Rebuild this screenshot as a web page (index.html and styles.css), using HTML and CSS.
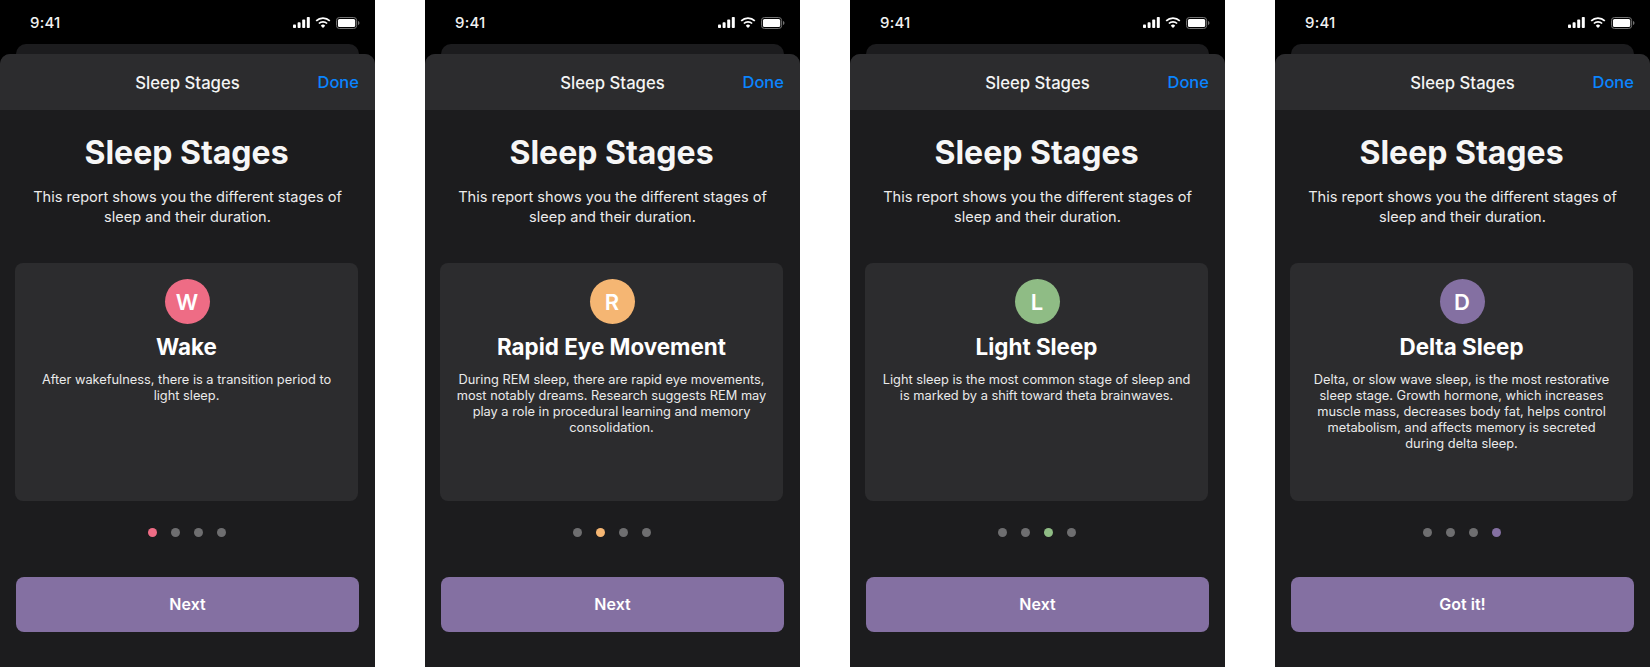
FILE: index.html
```html
<!DOCTYPE html>
<html lang="en">
<head>
<meta charset="utf-8">
<title>Sleep Stages</title>
<link rel="stylesheet" href="styles.css">
</head>
<body>
<main class="row">
  <section class="phone">
    <div class="status"><span class="time">9:41</span><span class="icons"><svg class="ic-signal" viewBox="0 0 17 11"><rect x="0" y="7.5" width="3" height="3.5" rx=".8"/><rect x="4.6" y="5.2" width="3" height="5.8" rx=".8"/><rect x="9.2" y="2.6" width="3" height="8.4" rx=".8"/><rect x="13.8" y="0" width="3" height="11" rx=".8"/></svg><svg class="ic-wifi" viewBox="0 0 16 11"><path class="arc" d="M1.200 3.900A9.800 9.800 0 0 1 14.800 3.900"/><path class="arc" d="M3.900 6.500A5.900 5.900 0 0 1 12.100 6.500"/><path d="M5.800 8.700A3.100 3.100 0 0 1 10.200 8.700L8 11z"/></svg><svg class="ic-batt" viewBox="0 0 25 12" preserveAspectRatio="none"><rect class="batt-shell" x=".5" y=".5" width="21" height="11" rx="3"/><rect x="2" y="2" width="18" height="8" rx="1.6"/><path class="batt-cap" d="M23 4v4c.8-.3 1.400-1.100 1.400-2S23.800 4.300 23 4z"/></svg></span></div>
    <div class="backsheet"></div>
    <div class="sheet">
      <header class="nav"><span class="nav-title">Sleep Stages</span><span class="done">Done</span></header>
      <div class="intro"><h1>Sleep Stages</h1><p>This report shows you the different stages of sleep and their duration.</p></div>
      <article class="card"><span class="badge wake">W</span><h2>Wake</h2><p>After wakefulness, there is a transition period to light sleep.</p></article>
      <div class="dots"><i class="dot wake"></i><i class="dot"></i><i class="dot"></i><i class="dot"></i></div>
      <button class="cta">Next</button>
    </div>
  </section>
  <section class="phone">
    <div class="status"><span class="time">9:41</span><span class="icons"><svg class="ic-signal" viewBox="0 0 17 11"><rect x="0" y="7.5" width="3" height="3.5" rx=".8"/><rect x="4.6" y="5.2" width="3" height="5.8" rx=".8"/><rect x="9.2" y="2.6" width="3" height="8.4" rx=".8"/><rect x="13.8" y="0" width="3" height="11" rx=".8"/></svg><svg class="ic-wifi" viewBox="0 0 16 11"><path class="arc" d="M1.200 3.900A9.800 9.800 0 0 1 14.800 3.900"/><path class="arc" d="M3.900 6.500A5.900 5.900 0 0 1 12.100 6.500"/><path d="M5.800 8.700A3.100 3.100 0 0 1 10.200 8.700L8 11z"/></svg><svg class="ic-batt" viewBox="0 0 25 12" preserveAspectRatio="none"><rect class="batt-shell" x=".5" y=".5" width="21" height="11" rx="3"/><rect x="2" y="2" width="18" height="8" rx="1.6"/><path class="batt-cap" d="M23 4v4c.8-.3 1.400-1.100 1.400-2S23.800 4.300 23 4z"/></svg></span></div>
    <div class="backsheet"></div>
    <div class="sheet">
      <header class="nav"><span class="nav-title">Sleep Stages</span><span class="done">Done</span></header>
      <div class="intro"><h1>Sleep Stages</h1><p>This report shows you the different stages of sleep and their duration.</p></div>
      <article class="card"><span class="badge rem">R</span><h2>Rapid Eye Movement</h2><p>During REM sleep, there are rapid eye movements, most notably dreams. Research suggests REM may play a role in procedural learning and memory consolidation.</p></article>
      <div class="dots"><i class="dot"></i><i class="dot rem"></i><i class="dot"></i><i class="dot"></i></div>
      <button class="cta">Next</button>
    </div>
  </section>
  <section class="phone">
    <div class="status"><span class="time">9:41</span><span class="icons"><svg class="ic-signal" viewBox="0 0 17 11"><rect x="0" y="7.5" width="3" height="3.5" rx=".8"/><rect x="4.6" y="5.2" width="3" height="5.8" rx=".8"/><rect x="9.2" y="2.6" width="3" height="8.4" rx=".8"/><rect x="13.8" y="0" width="3" height="11" rx=".8"/></svg><svg class="ic-wifi" viewBox="0 0 16 11"><path class="arc" d="M1.200 3.900A9.800 9.800 0 0 1 14.800 3.900"/><path class="arc" d="M3.900 6.500A5.900 5.900 0 0 1 12.100 6.500"/><path d="M5.800 8.700A3.100 3.100 0 0 1 10.200 8.700L8 11z"/></svg><svg class="ic-batt" viewBox="0 0 25 12" preserveAspectRatio="none"><rect class="batt-shell" x=".5" y=".5" width="21" height="11" rx="3"/><rect x="2" y="2" width="18" height="8" rx="1.6"/><path class="batt-cap" d="M23 4v4c.8-.3 1.400-1.100 1.400-2S23.800 4.300 23 4z"/></svg></span></div>
    <div class="backsheet"></div>
    <div class="sheet">
      <header class="nav"><span class="nav-title">Sleep Stages</span><span class="done">Done</span></header>
      <div class="intro"><h1>Sleep Stages</h1><p>This report shows you the different stages of sleep and their duration.</p></div>
      <article class="card"><span class="badge light">L</span><h2>Light Sleep</h2><p>Light sleep is the most common stage of sleep and is marked by a shift toward theta brainwaves.</p></article>
      <div class="dots"><i class="dot"></i><i class="dot"></i><i class="dot light"></i><i class="dot"></i></div>
      <button class="cta">Next</button>
    </div>
  </section>
  <section class="phone">
    <div class="status"><span class="time">9:41</span><span class="icons"><svg class="ic-signal" viewBox="0 0 17 11"><rect x="0" y="7.5" width="3" height="3.5" rx=".8"/><rect x="4.6" y="5.2" width="3" height="5.8" rx=".8"/><rect x="9.2" y="2.6" width="3" height="8.4" rx=".8"/><rect x="13.8" y="0" width="3" height="11" rx=".8"/></svg><svg class="ic-wifi" viewBox="0 0 16 11"><path class="arc" d="M1.200 3.900A9.800 9.800 0 0 1 14.800 3.900"/><path class="arc" d="M3.900 6.500A5.900 5.900 0 0 1 12.100 6.500"/><path d="M5.800 8.700A3.100 3.100 0 0 1 10.200 8.700L8 11z"/></svg><svg class="ic-batt" viewBox="0 0 25 12" preserveAspectRatio="none"><rect class="batt-shell" x=".5" y=".5" width="21" height="11" rx="3"/><rect x="2" y="2" width="18" height="8" rx="1.6"/><path class="batt-cap" d="M23 4v4c.8-.3 1.400-1.100 1.400-2S23.800 4.300 23 4z"/></svg></span></div>
    <div class="backsheet"></div>
    <div class="sheet">
      <header class="nav"><span class="nav-title">Sleep Stages</span><span class="done">Done</span></header>
      <div class="intro"><h1>Sleep Stages</h1><p>This report shows you the different stages of sleep and their duration.</p></div>
      <article class="card"><span class="badge delta">D</span><h2>Delta Sleep</h2><p>Delta, or slow wave sleep, is the most restorative sleep stage. Growth hormone, which increases muscle mass, decreases body fat, helps control metabolism, and affects memory is secreted during delta sleep.</p></article>
      <div class="dots"><i class="dot"></i><i class="dot"></i><i class="dot"></i><i class="dot delta"></i></div>
      <button class="cta">Got it!</button>
    </div>
  </section>
</main>
</body>
</html>
```

FILE: styles.css
```css
* { box-sizing: border-box; }
html, body { margin: 0; height: 100%; background: #fff; }
body { font-family: Inter, "Liberation Sans", sans-serif; color: #fff; overflow: hidden; }
.row { display: flex; justify-content: space-between; width: 1650px; height: 667px; }
.phone { width: 375px; height: 667px; background: #000; display: flex; flex-direction: column; }

.status { height: 44px; flex: none; display: flex; align-items: center; justify-content: space-between; padding: 1px 15px 0 30px; }
.time { font-size: 15px; font-weight: 500; letter-spacing: .2px; color: #f2f2f2; }
.icons { display: flex; align-items: center; gap: 5px; }
.icons svg { display: block; fill: #fff; }
.ic-signal { width: 17px; height: 11px; }
.ic-wifi { width: 16px; height: 11px; }
.ic-wifi .arc { fill: none; stroke: #fff; stroke-width: 1.7; }
.ic-batt { width: 24px; height: 12px; }
.batt-shell { fill: none; stroke: #777; }
.batt-cap { fill: #777; }

.backsheet { height: 10px; flex: none; margin: 0 16px; background: #1c1c1e; border-radius: 10px 10px 0 0; }
.sheet { flex: 1; min-height: 0; display: flex; flex-direction: column; align-items: stretch; background: #1c1c1e; border-radius: 10px 10px 0 0; overflow: hidden; }

.nav { height: 56px; flex: none; padding-top: 1px; background: #2c2c2e; display: flex; align-items: center; justify-content: center; position: relative; }
.nav-title { font-size: 16.7px; font-weight: 500; color: #f4f4f4; }
.done { position: absolute; right: 16px; top: 18px; font-size: 16.5px; line-height: 21px; font-weight: 500; color: #0a84ff; }

.intro { height: 153px; flex: none; padding: 24px 25px 0 23px; text-align: center; }
.intro h1 { margin: 0; font-size: 32px; line-height: 38px; font-weight: 700; color: #f6f6f6; }
.intro p { margin: 15px -1px 0 1px; font-size: 14.55px; line-height: 20px; color: #ebebeb; }

.card { height: 238px; flex: none; margin: 0 17px 0 15px; padding: 16px 16.5px 0; background: #2c2c2e; border-radius: 8px; display: flex; flex-direction: column; align-items: center; text-align: center; }
.badge { width: 45px; height: 45px; flex: none; margin-left: 2px; padding-right: 1px; border-radius: 50%; display: flex; align-items: center; justify-content: center; font-size: 22px; font-weight: 600; color: #fff; }
.card h2 { margin: 9px 0 0; font-size: 22.4px; line-height: 28px; font-weight: 700; color: #fff; }
.card p { margin: 11px 0 0; font-size: 12.8px; line-height: 16px; color: #eaeaea; }

.wake { background: #ee6c85; }
.rem { background: #f5b673; }
.light { background: #8fbc85; }
.delta { background: #8470a2; }

.dots { height: 9px; flex: none; margin: 27px 0 0; padding-right: 1px; display: flex; justify-content: center; gap: 14px; }
.dot { width: 9px; height: 9px; border-radius: 50%; background: #6e6e70; }
.dot.wake { background: #ee6c85; }
.dot.rem { background: #f5b673; }
.dot.light { background: #8fbc85; }
.dot.delta { background: #8470a2; }

.cta { height: 55px; flex: none; margin: 40px 16px 0; padding: 0 0 2px; border: 0; border-radius: 8px; background: #8470a2; color: #fff; font: 600 16px Inter, "Liberation Sans", sans-serif; }
```
